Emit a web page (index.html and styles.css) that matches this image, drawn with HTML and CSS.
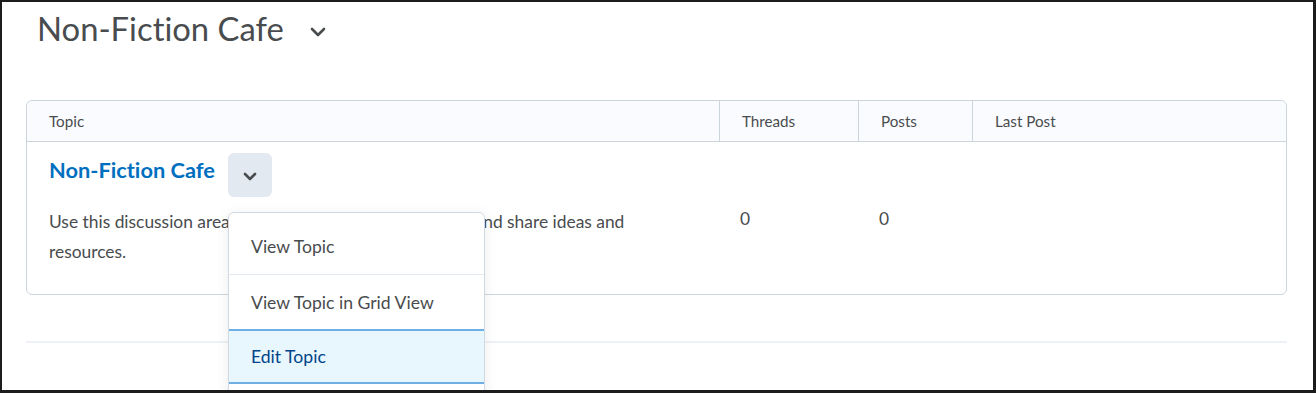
FILE: index.html
```html
<!DOCTYPE html>
<html lang="en">
<head>
<meta charset="utf-8">
<title>Non-Fiction Cafe</title>
<link rel="stylesheet" href="styles.css">
</head>
<body>
<div class="frame">
  <div class="page">
    <div class="title-row">
      <h1 class="title">Non-Fiction Cafe</h1>
      <svg class="title-chev" width="16" height="10" viewBox="0 0 16 10"><path d="M2 2 L8 8 L14 2" fill="none" stroke="#494c4e" stroke-width="2.6" stroke-linecap="round" stroke-linejoin="round"/></svg>
    </div>

    <div class="table">
      <div class="th th-topic">Topic</div>
      <div class="th">Threads</div>
      <div class="th">Posts</div>
      <div class="th th-last">Last Post</div>

      <div class="td td-topic">
        <div class="topic-head">
          <a class="topic-link" href="#">Non-Fiction Cafe</a>
          <div class="menu-wrap">
            <button class="menu-btn" type="button" aria-label="Actions">
              <svg width="14" height="9" viewBox="0 0 14 9"><path d="M2 2 L7 7 L12 2" fill="none" stroke="#494c4e" stroke-width="2.6" stroke-linecap="round" stroke-linejoin="round"/></svg>
            </button>
            <div class="menu">
              <div class="menu-item">View Topic</div>
              <div class="menu-item">View Topic in Grid View</div>
              <div class="menu-item active">Edit Topic</div>
              <div class="menu-item">Delete Topic</div>
            </div>
          </div>
        </div>
        <p class="desc">Use this discussion area to talk about non-fiction works and share ideas and resources.</p>
      </div>
      <div class="td td-num">0</div>
      <div class="td td-num">0</div>
      <div class="td td-last"></div>
    </div>

    <div class="rule"></div>
  </div>
</div>
</body>
</html>
```

FILE: styles.css
```css
* { box-sizing: border-box; }
html, body { margin: 0; padding: 0; background: #fff; }
body {
  font-family: Lato, "Noto Sans", sans-serif;
  color: #494c4e;
  font-variant-ligatures: none;
}
.frame {
  width: 1316px;
  height: 393px;
  border-style: solid;
  border-color: #1c1c1c;
  border-width: 2px 3px 3px 2px;
  overflow: hidden;
  background: #fff;
}
.page {
  padding: 0 24px 0 24px;
}
.title-row {
  display: flex;
  align-items: center;
  height: 58px;
  padding-left: 11px;
}
.title {
  margin: 0;
  font-weight: 400;
  font-size: 32.8px;
  line-height: 40px;
  color: #494c4e;
  margin-top: -4px;
}
.title-chev {
  margin-left: 26px;
  margin-top: 2px;
}
.table {
  margin-top: 40px;
  width: 1261px;
  display: grid;
  grid-template-columns: 692px 139px 114px 1fr;
  border: 1px solid #cdd5dc;
  border-radius: 6px;
}
.th {
  background: #f9fbff;
  height: 41px;
  border-bottom: 1px solid #cdd5dc;
  border-left: 1px solid #cdd5dc;
  font-size: 15.2px;
  line-height: 41px;
  padding-left: 22px;
  color: #494c4e;
}
.th-topic { border-left: none; border-top-left-radius: 6px; }
.th-last { border-top-right-radius: 6px; }
.td {
  font-size: 17.4px;
  color: #494c4e;
}
.td-topic {
  padding: 10px 22px 27px 22px;
}
.td-num {
  align-self: center;
  padding-left: 21px;
  padding-bottom: 0;
}
.topic-head {
  display: flex;
  align-items: flex-start;
}
.topic-link {
  font-size: 21.8px;
  font-weight: 700;
  color: #006fbf;
  text-decoration: none;
  line-height: 36px;
  margin-top: 0;
}
.menu-wrap {
  position: relative;
  margin-left: 13px;
}
.menu-btn {
  width: 44px;
  height: 44px;
  border: none;
  border-radius: 6px;
  background: #e3e9f1;
  display: flex;
  align-items: center;
  justify-content: center;
  padding: 0;
  margin-top: 1px;
}
.menu-btn svg { margin-top: 3px; }
.menu {
  position: absolute;
  top: 60px;
  left: 0;
  width: 257px;
  background: #fff;
  border: 1px solid #d3d9e3;
  border-radius: 6px;
  box-shadow: 0 2px 12px rgba(86, 90, 92, 0.12);
  padding-top: 6px;
  z-index: 5;
}
.menu-item {
  height: 55px;
  line-height: 56px;
  padding-left: 22px;
  font-size: 17.6px;
  color: #494c4e;
  border-top: 1px solid #e3e9f1;
  white-space: nowrap;
}
.menu-item:first-child { border-top: none; }
.menu-item.active {
  background: #e8f6fd;
  color: #004489;
  border-top: 2px solid #6eb0e3;
  border-bottom: 2px solid #6eb0e3;
  line-height: 52px;
}
.menu-item.active + .menu-item { border-top: none; }
.desc {
  margin: 10px 0 0 0;
  font-size: 17.4px;
  line-height: 30px;
  width: 600px;
  color: #494c4e;
}
.rule {
  margin-top: 46px;
  width: 1261px;
  height: 2px;
  background: #eef1f5;
}
```
